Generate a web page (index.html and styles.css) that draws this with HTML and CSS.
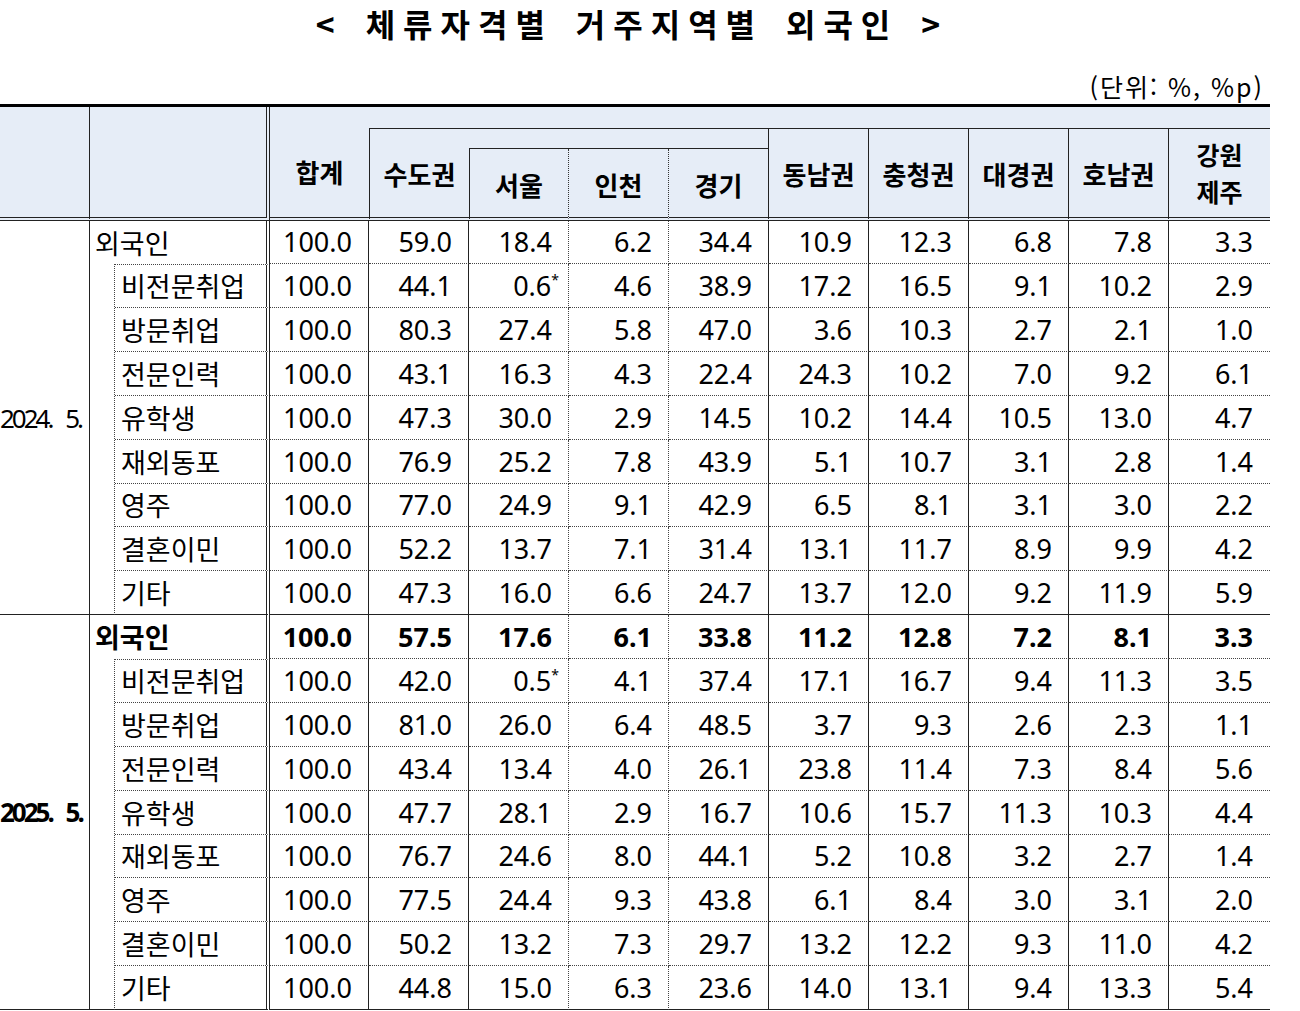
FILE: index.html
```html
<!DOCTYPE html>
<html lang="ko">
<head>
<meta charset="utf-8">
<title>체류자격별 거주지역별 외국인</title>
<link rel="stylesheet" href="styles.css">
</head>
<body>
<div class="page">
  <h1 class="title">&lt; 체류자격별 거주지역별 외국인 &gt;</h1>
  <div class="unit">(단위: %, %p)</div>
  <table class="stats">
    <colgroup>
      <col class="c-year"><col class="c-indent"><col class="c-name"><col class="c-total">
      <col class="c-num"><col class="c-num"><col class="c-num"><col class="c-num">
      <col class="c-num"><col class="c-num"><col class="c-num"><col class="c-num">
      <col class="c-last">
    </colgroup>
    <thead>
      <tr class="ra">
        <th rowspan="3" class="h-year"></th>
        <th rowspan="3" colspan="2" class="h-name"></th>
        <th rowspan="3" class="h-total"><span>합계</span></th>
        <th colspan="9" class="h-blank"></th>
      </tr>
      <tr class="rb">
        <th rowspan="2" class="h-metro"><span>수도권</span></th>
        <th colspan="3" class="h-blank2"></th>
        <th rowspan="2" class="h-reg"><span>동남권</span></th>
        <th rowspan="2" class="h-reg"><span>충청권</span></th>
        <th rowspan="2" class="h-reg"><span>대경권</span></th>
        <th rowspan="2" class="h-reg"><span>호남권</span></th>
        <th rowspan="2" class="h-reg h-end"><span class="two">강원</span><span class="two">제주</span></th>
      </tr>
      <tr class="rc">
        <th class="h-sub h-seoul">서울</th>
        <th class="h-sub h-dot">인천</th>
        <th class="h-sub">경기</th>
      </tr>
    </thead>
    <tbody>
      <tr class="first">
        <td rowspan="9" class="year">2024. 5.</td>
        <td colspan="2" class="name top">외국인</td>
        <td class="n">100.0</td><td class="n">59.0</td><td class="n">18.4</td><td class="n">6.2</td><td class="n">34.4</td><td class="n">10.9</td><td class="n">12.3</td><td class="n">6.8</td><td class="n">7.8</td><td class="n">3.3</td>
      </tr>
      <tr>
        <td rowspan="8" class="indent"></td>
        <td class="name sub first-sub">비전문취업</td>
        <td class="n">100.0</td><td class="n">44.1</td><td class="n">0.6<sup>*</sup></td><td class="n">4.6</td><td class="n">38.9</td><td class="n">17.2</td><td class="n">16.5</td><td class="n">9.1</td><td class="n">10.2</td><td class="n">2.9</td>
      </tr>
      <tr>
        <td class="name sub">방문취업</td>
        <td class="n">100.0</td><td class="n">80.3</td><td class="n">27.4</td><td class="n">5.8</td><td class="n">47.0</td><td class="n">3.6</td><td class="n">10.3</td><td class="n">2.7</td><td class="n">2.1</td><td class="n">1.0</td>
      </tr>
      <tr>
        <td class="name sub">전문인력</td>
        <td class="n">100.0</td><td class="n">43.1</td><td class="n">16.3</td><td class="n">4.3</td><td class="n">22.4</td><td class="n">24.3</td><td class="n">10.2</td><td class="n">7.0</td><td class="n">9.2</td><td class="n">6.1</td>
      </tr>
      <tr>
        <td class="name sub">유학생</td>
        <td class="n">100.0</td><td class="n">47.3</td><td class="n">30.0</td><td class="n">2.9</td><td class="n">14.5</td><td class="n">10.2</td><td class="n">14.4</td><td class="n">10.5</td><td class="n">13.0</td><td class="n">4.7</td>
      </tr>
      <tr>
        <td class="name sub">재외동포</td>
        <td class="n">100.0</td><td class="n">76.9</td><td class="n">25.2</td><td class="n">7.8</td><td class="n">43.9</td><td class="n">5.1</td><td class="n">10.7</td><td class="n">3.1</td><td class="n">2.8</td><td class="n">1.4</td>
      </tr>
      <tr class="tight">
        <td class="name sub">영주</td>
        <td class="n">100.0</td><td class="n">77.0</td><td class="n">24.9</td><td class="n">9.1</td><td class="n">42.9</td><td class="n">6.5</td><td class="n">8.1</td><td class="n">3.1</td><td class="n">3.0</td><td class="n">2.2</td>
      </tr>
      <tr>
        <td class="name sub">결혼이민</td>
        <td class="n">100.0</td><td class="n">52.2</td><td class="n">13.7</td><td class="n">7.1</td><td class="n">31.4</td><td class="n">13.1</td><td class="n">11.7</td><td class="n">8.9</td><td class="n">9.9</td><td class="n">4.2</td>
      </tr>
      <tr class="end">
        <td class="name sub">기타</td>
        <td class="n">100.0</td><td class="n">47.3</td><td class="n">16.0</td><td class="n">6.6</td><td class="n">24.7</td><td class="n">13.7</td><td class="n">12.0</td><td class="n">9.2</td><td class="n">11.9</td><td class="n">5.9</td>
      </tr>

      <tr class="bold">
        <td rowspan="9" class="year">2025. 5.</td>
        <td colspan="2" class="name top">외국인</td>
        <td class="n">100.0</td><td class="n">57.5</td><td class="n">17.6</td><td class="n">6.1</td><td class="n">33.8</td><td class="n">11.2</td><td class="n">12.8</td><td class="n">7.2</td><td class="n">8.1</td><td class="n">3.3</td>
      </tr>
      <tr>
        <td rowspan="8" class="indent"></td>
        <td class="name sub first-sub">비전문취업</td>
        <td class="n">100.0</td><td class="n">42.0</td><td class="n">0.5<sup>*</sup></td><td class="n">4.1</td><td class="n">37.4</td><td class="n">17.1</td><td class="n">16.7</td><td class="n">9.4</td><td class="n">11.3</td><td class="n">3.5</td>
      </tr>
      <tr>
        <td class="name sub">방문취업</td>
        <td class="n">100.0</td><td class="n">81.0</td><td class="n">26.0</td><td class="n">6.4</td><td class="n">48.5</td><td class="n">3.7</td><td class="n">9.3</td><td class="n">2.6</td><td class="n">2.3</td><td class="n">1.1</td>
      </tr>
      <tr>
        <td class="name sub">전문인력</td>
        <td class="n">100.0</td><td class="n">43.4</td><td class="n">13.4</td><td class="n">4.0</td><td class="n">26.1</td><td class="n">23.8</td><td class="n">11.4</td><td class="n">7.3</td><td class="n">8.4</td><td class="n">5.6</td>
      </tr>
      <tr>
        <td class="name sub">유학생</td>
        <td class="n">100.0</td><td class="n">47.7</td><td class="n">28.1</td><td class="n">2.9</td><td class="n">16.7</td><td class="n">10.6</td><td class="n">15.7</td><td class="n">11.3</td><td class="n">10.3</td><td class="n">4.4</td>
      </tr>
      <tr class="tight">
        <td class="name sub">재외동포</td>
        <td class="n">100.0</td><td class="n">76.7</td><td class="n">24.6</td><td class="n">8.0</td><td class="n">44.1</td><td class="n">5.2</td><td class="n">10.8</td><td class="n">3.2</td><td class="n">2.7</td><td class="n">1.4</td>
      </tr>
      <tr>
        <td class="name sub">영주</td>
        <td class="n">100.0</td><td class="n">77.5</td><td class="n">24.4</td><td class="n">9.3</td><td class="n">43.8</td><td class="n">6.1</td><td class="n">8.4</td><td class="n">3.0</td><td class="n">3.1</td><td class="n">2.0</td>
      </tr>
      <tr>
        <td class="name sub">결혼이민</td>
        <td class="n">100.0</td><td class="n">50.2</td><td class="n">13.2</td><td class="n">7.3</td><td class="n">29.7</td><td class="n">13.2</td><td class="n">12.2</td><td class="n">9.3</td><td class="n">11.0</td><td class="n">4.2</td>
      </tr>
      <tr class="end">
        <td class="name sub">기타</td>
        <td class="n">100.0</td><td class="n">44.8</td><td class="n">15.0</td><td class="n">6.3</td><td class="n">23.6</td><td class="n">14.0</td><td class="n">13.1</td><td class="n">9.4</td><td class="n">13.3</td><td class="n">5.4</td>
      </tr>
    </tbody>
  </table>
</div>
</body>
</html>
```

FILE: styles.css
```css
html, body {
  margin: 0;
  padding: 0;
  background: #ffffff;
  color: #000000;
}

.page {
  width: 1270px;
  font-family: "Noto Sans", "Noto Sans CJK KR", sans-serif;
}

.title {
  margin: 0;
  height: 47px;
  line-height: 47px;
  font-family: "Noto Sans CJK KR", sans-serif;
  font-weight: 700;
  font-size: 32px;
  letter-spacing: 8px;
  word-spacing: 6px;
  text-align: center;
  padding-right: 6px;
}

.unit {
  margin-top: 24px;
  height: 30px;
  line-height: 30px;
  text-align: right;
  padding-right: 6px;
  font-family: "Noto Sans CJK KR", sans-serif;
  font-size: 25px;
  letter-spacing: 2px;
}

.stats {
  margin-top: 3px;
  width: 1270px;
  table-layout: fixed;
  border-collapse: separate;
  border-spacing: 0;
  border-top: 3px solid #000;
}

.c-year { width: 90px; }
.c-indent { width: 25px; }
.c-name { width: 155px; }
.c-total { width: 99px; }
.c-num { width: 100px; }
.c-last { width: 101px; }

/* header */
.stats th {
  padding: 0;
  background: #e6edf7;
  font-family: "Noto Sans CJK KR", sans-serif;
  font-weight: 700;
  font-size: 26px;
  line-height: 33px;
  text-align: center;
  vertical-align: middle;
}

.stats th .two {
  display: block;
  font-size: 25px;
  height: 37px;
  line-height: 37px;
}

.stats tr.ra { height: 22px; }
.stats tr.rb { height: 20px; }
.stats tr.rc { height: 72px; }

.h-year {
  border-right: 1px solid #222;
  border-bottom: 4px double #222;
}
.h-name {
  border-right: 4px double #222;
  border-bottom: 4px double #222;
}
.h-total {
  border-bottom: 4px double #222;
  padding-top: 18px !important;
}
.h-blank {
  border-bottom: 1px solid #222;
}
.h-metro {
  border-left: 1px solid #222;
  border-bottom: 4px double #222;
}
.h-blank2 {
  border-bottom: 1px solid #222;
  border-right: 1px solid #222;
}
.h-reg {
  border-right: 1px solid #222;
  border-bottom: 4px double #222;
}
.h-reg.h-end {
  border-right: none;
}
.h-sub {
  border-right: 1px solid #222;
  border-bottom: 4px double #222;
  padding-top: 2px !important;
}
.h-seoul {
  border-left: 1px solid #222;
  border-right: 1px dotted #333;
}
.h-dot {
  border-right: 1px dotted #333;
}

/* body */
.stats tbody tr { height: 44px; }
.stats tbody tr.first { height: 43px; }
.stats tbody tr.tight { height: 43px; }

.stats td {
  padding: 0;
  font-size: 27px;
  line-height: 36px;
  vertical-align: middle;
  white-space: nowrap;
}

.year {
  border-right: 1px solid #222;
  border-bottom: 1px solid #222;
  text-align: left;
  font-family: "Noto Sans", sans-serif;
  font-size: 26px !important;
  letter-spacing: -3px;
  word-spacing: 10px;
  padding-left: 0;
}
.bold .year { font-weight: 700; }

.indent {
  border-right: 1px dotted #444;
  border-bottom: 1px solid #222;
}

.name {
  border-right: 4px double #222;
  text-align: left;
  font-family: "Noto Sans CJK KR", sans-serif;
}
.name.top {
  padding-left: 5px !important;
}
.name.sub {
  padding-left: 6px !important;
  border-bottom: 1px dotted #444;
}
.name.first-sub {
  border-top: 1px dotted #444;
}

.n {
  text-align: right;
  padding-right: 16px !important;
  border-right: 1px solid #222;
  border-bottom: 1px dotted #444;
}
.n:nth-last-child(8),
.n:nth-last-child(7) {
  border-right: 1px dotted #444;
}
.n:last-child {
  border-right: none;
  padding-right: 17px !important;
}

.stats tr.end td.n,
.stats tr.end td.name {
  border-bottom: 1px solid #222;
}

.bold td { font-weight: 700; }

sup {
  font-size: 14px;
  line-height: 0;
  vertical-align: 11px;
  margin-right: -7px;
}
```
